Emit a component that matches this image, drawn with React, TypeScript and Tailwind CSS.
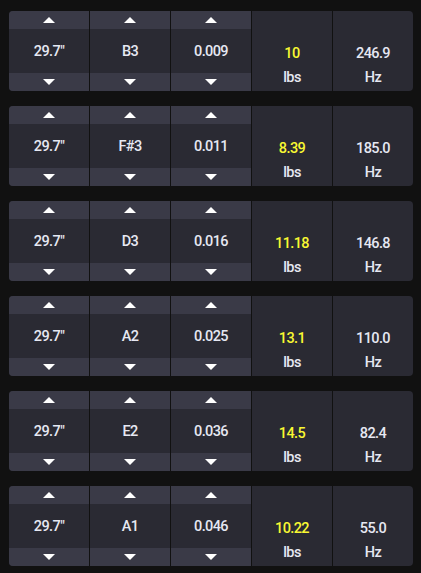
const rows = [
  { len: '29.7"', note: "B3", gauge: "0.009", lbs: "10", hz: "246.9" },
  { len: '29.7"', note: "F#3", gauge: "0.011", lbs: "8.39", hz: "185.0" },
  { len: '29.7"', note: "D3", gauge: "0.016", lbs: "11.18", hz: "146.8" },
  { len: '29.7"', note: "A2", gauge: "0.025", lbs: "13.1", hz: "110.0" },
  { len: '29.7"', note: "E2", gauge: "0.036", lbs: "14.5", hz: "82.4" },
  { len: '29.7"', note: "A1", gauge: "0.046", lbs: "10.22", hz: "55.0" },
];

function Arrow({ up }: { up?: boolean }) {
  return (
    <svg width="12" height="6" viewBox="0 0 12 6" className="block">
      <polygon points={up ? "6,0 12,6 0,6" : "0,0 12,0 6,6"} fill="#ffffff" />
    </svg>
  );
}

function Spinner({ value }: { value: string }) {
  return (
    <div className="flex w-20 flex-col">
      <button className="flex h-[18px] items-center justify-center bg-[#3a3a47]">
        <Arrow up />
      </button>
      <div className="flex h-[44px] items-center justify-center pt-[2px] text-[14.5px] text-[#e6e8f2]">
        {value}
      </div>
      <button className="flex h-[18px] items-center justify-center bg-[#3a3a47]">
        <Arrow />
      </button>
    </div>
  );
}

function Readout({ value, unit, accent }: { value: string; unit: string; accent?: boolean }) {
  return (
    <div className="flex w-20 flex-col items-center pt-[31px] text-[14.5px] leading-[24px]">
      <div className={accent ? "h-[24px] text-[#f8f832]" : "h-[24px] text-[#e6e8f2]"}>
        {value}
      </div>
      <div className="text-[#e6e8f2]">{unit}</div>
    </div>
  );
}

export default function App() {
  return (
    <div
      className="flex min-h-[573px] w-[421px] flex-col gap-[15px] bg-[#111111] pl-[9px] pt-[11px] font-medium tracking-[-0.6px]"
      style={{ fontFamily: "Roboto, 'Noto Sans', sans-serif" }}
    >
      {rows.map((r, i) => (
        <div
          key={i}
          className="flex h-[80px] w-[404px] gap-px overflow-hidden rounded-[4px] bg-[#111111]"
        >
          <div className="flex bg-[#2a2a33]"><Spinner value={r.len} /></div>
          <div className="flex bg-[#2a2a33]"><Spinner value={r.note} /></div>
          <div className="flex bg-[#2a2a33]"><Spinner value={r.gauge} /></div>
          <div className="flex bg-[#2a2a33]"><Readout value={r.lbs} unit="lbs" accent /></div>
          <div className="flex bg-[#2a2a33]"><Readout value={r.hz} unit="Hz" /></div>
        </div>
      ))}
    </div>
  );
}
